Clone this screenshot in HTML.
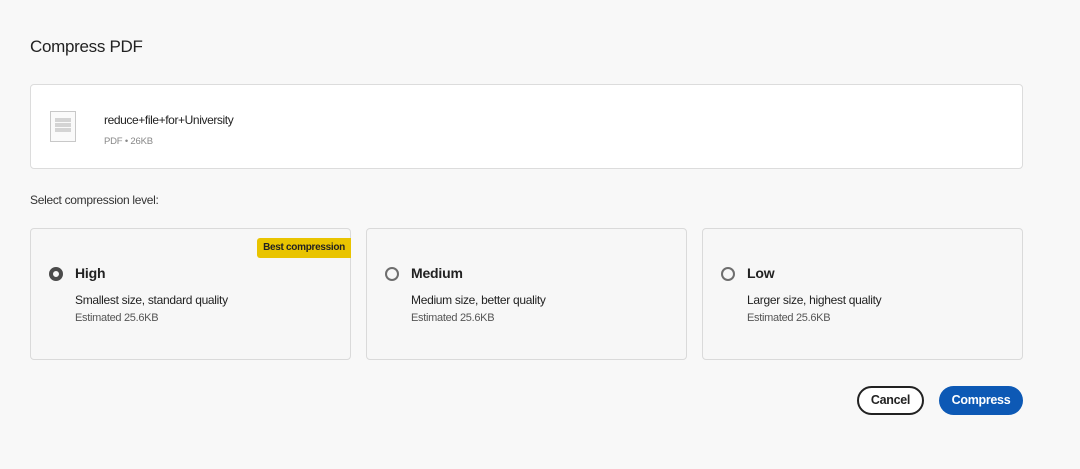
<!DOCTYPE html>
<html><head><style>
*{box-sizing:border-box;margin:0;padding:0}
body{width:1080px;height:469px;background:#f8f8f8;font-family:"Liberation Sans",sans-serif;color:#222;position:relative;overflow:hidden}
.abs{position:absolute}
h1{position:absolute;left:30px;top:37px;font-size:17px;font-weight:normal;color:#222;letter-spacing:-0.3px}
.file{left:30px;top:84px;width:993px;height:85px;background:#fff;border:1px solid #dcdcdc;border-radius:4px}
.card{top:228px;width:321px;height:132px;border:1px solid #dadada;border-radius:4px;background:#f7f7f7}
.radio{position:absolute;left:18px;top:38px;width:14px;height:14px;border:2px solid #6e6e6e;border-radius:50%}
.radio.on{border:4px solid #4b4b4b}
.t{position:absolute;left:44px;top:36px;font-size:14px;font-weight:bold;color:#222;letter-spacing:-0.2px}
.d{position:absolute;left:44px;top:64px;font-size:12px;color:#222;letter-spacing:-0.3px}
.e{position:absolute;left:44px;top:83px;font-size:11px;color:#555;letter-spacing:-0.3px}
.btn{top:386px;height:29px;border-radius:15px;font-size:12.5px;font-weight:bold;text-align:center;line-height:25px;letter-spacing:-0.3px}
</style></head><body>
<h1>Compress PDF</h1>
<div class="abs file">
 <div class="abs" style="left:19px;top:26px;width:26px;height:31px;border:1px solid #c8c8c8;background:#fafafa">
  <div style="margin:6px 4px 0;height:3px;border-top:2px solid #d4d4d4;border-bottom:2px solid #d4d4d4"></div>
  <div style="margin:1px 4px 0;height:3px;border-top:2px solid #d4d4d4;border-bottom:2px solid #d4d4d4"></div>
  <div style="margin:1px 4px 0;height:3px;border-top:2px solid #d4d4d4;border-bottom:2px solid #d4d4d4"></div>
 </div>
 <div class="abs" style="left:73px;top:28px;font-size:12px;color:#222;letter-spacing:-0.4px">reduce+file+for+University</div>
 <div class="abs" style="left:73px;top:51px;font-size:9.5px;color:#888;letter-spacing:-0.2px">PDF • 26KB</div>
</div>
<div class="abs" style="left:30px;top:193px;font-size:12px;color:#333;letter-spacing:-0.3px">Select compression level:</div>
<div class="abs card" style="left:30px">
 <div class="abs" style="right:-1px;top:9px;background:#e9c400;border-radius:3px 0 0 3px;padding:0 6px;height:20px;line-height:20px;font-size:10px;font-weight:bold;color:#222;letter-spacing:-0.3px">Best compression</div>
 <div class="radio on"></div><div class="t">High</div>
 <div class="d">Smallest size, standard quality</div><div class="e">Estimated 25.6KB</div>
</div>
<div class="abs card" style="left:366px">
 <div class="radio"></div><div class="t">Medium</div>
 <div class="d">Medium size, better quality</div><div class="e">Estimated 25.6KB</div>
</div>
<div class="abs card" style="left:702px">
 <div class="radio"></div><div class="t">Low</div>
 <div class="d">Larger size, highest quality</div><div class="e">Estimated 25.6KB</div>
</div>
<div class="abs btn" style="left:857px;width:67px;border:2px solid #222;background:#fff;color:#222">Cancel</div>
<div class="abs btn" style="left:939px;width:84px;background:#0d59b5;color:#fff;line-height:29px">Compress</div>
</body></html>
